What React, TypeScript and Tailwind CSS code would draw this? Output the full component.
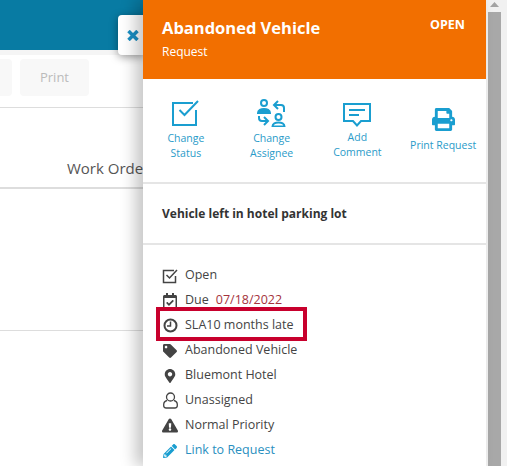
import React from 'react';
import {
  FaExclamationTriangle,
  FaMapMarkerAlt,
  FaPencilAlt,
  FaPrint,
  FaRegCalendarCheck,
  FaTag,
} from 'react-icons/fa';

const StatusIcon = () => (
  <svg width="27" height="26" viewBox="0 0 27 26" fill="none" stroke="#1a9ed0" strokeWidth="2">
    <path d="M21 3H1v22h23V10" />
    <path d="M7.500 10l5 5L26 1" />
  </svg>
);

const AssigneeIcon = () => (
  <svg width="29" height="28" viewBox="0 0 29 28" fill="none" stroke="#1a9ed0" strokeWidth="2">
    <circle cx="7" cy="4" r="3" />
    <path d="M1 14c0-5.500 12-5.500 12 0z" fill="#1a9ed0" />
    <circle cx="21.500" cy="18" r="3" />
    <path d="M15.500 27.500c0-5.500 12-5.500 12 0z" />
    <path d="M27 13V9c0-2-1-3-3-3h-6M21 2l-4 4 4 4" />
    <path d="M2 17v2c0 2 1 3 3 3h6M7 18l4 4-4 4" />
  </svg>
);

const CommentIcon = () => (
  <svg width="28" height="24" viewBox="0 0 28 24" fill="none" stroke="#1a9ed0" strokeWidth="2">
    <path d="M1 1h26v17h-9l-4 4.500L10 18H1z" />
    <path d="M6 7h16M6 12h10" />
  </svg>
);

const CheckIcon = () => (
  <svg width="16" height="16" viewBox="0 0 16 16" fill="none" stroke="#444" strokeWidth="1.500">
    <path d="M12 2.500H1.500v12h12V8" />
    <path d="M4.500 7l3 3L15 2" />
  </svg>
);

const ClockIcon = () => (
  <svg width="15" height="15" viewBox="0 0 15 15" fill="none" stroke="#444" strokeWidth="2">
    <circle cx="7.500" cy="7.500" r="6" />
    <path d="M7.500 3.500v4.500H4" strokeWidth="1.500" />
  </svg>
);

const UserIcon = () => (
  <svg width="15" height="17" viewBox="0 0 15 17" fill="none" stroke="#444" strokeWidth="1.300">
    <circle cx="7.500" cy="5" r="4" />
    <path d="M4 8.500c-2 .5-3.300 2-3.300 4v1c0 1.300 1 2.500 2.500 2.500h8.600c1.500 0 2.500-1.200 2.500-2.500v-1c0-2-1.300-3.500-3.300-4" />
  </svg>
);

const CloseIcon = () => (
  <svg width="12" height="11" viewBox="0 0 12 11" fill="none" stroke="#1a8fc4" strokeWidth="3.500">
    <path d="M1.500 1l9 9M10.500 1l-9 9" />
  </svg>
);

const actions = [
  { label: ['Change', 'Status'], icon: <StatusIcon />, box: 'h-[26px] mt-[21px]', gap: 'mt-[5px]' },
  { label: ['Change', 'Assignee'], icon: <AssigneeIcon />, box: 'h-[28px] mt-[20px]', gap: 'mt-[4px]' },
  { label: ['Add', 'Comment'], icon: <CommentIcon />, box: 'h-[24px] mt-[24px]', gap: 'mt-[3px]' },
  { label: ['Print Request'], icon: <FaPrint size={23} color="#1a9ed0" />, box: 'h-[23px] mt-[29px]', gap: 'mt-[7px]' },
];

const rows = [
  { icon: <CheckIcon />, text: 'Open' },
  { icon: <FaRegCalendarCheck size={16} />, text: 'Due', date: '07/18/2022' },
  { icon: <ClockIcon />, text: 'SLA10 months late' },
  { icon: <FaTag size={14} />, text: 'Abandoned Vehicle' },
  { icon: <FaMapMarkerAlt size={14} />, text: 'Bluemont Hotel' },
  { icon: <UserIcon />, text: 'Unassigned' },
  { icon: <FaExclamationTriangle size={17} />, text: 'Normal Priority' },
];

export default function App() {
  return (
    <div className="relative flex h-[466px] w-[507px] overflow-hidden bg-white text-[#444] font-['Open_Sans','Noto_Sans',sans-serif]">
      {/* Page behind the drawer */}
      <div className="w-[143px] shrink-0 overflow-hidden">
        <div className="h-[50px] bg-[#087ba3]" />
        <div className="h-[5px] bg-[#f5f5f5]" />
        <div className="flex h-[53px] items-start border-b border-[#ddd] pt-1">
          <div className="h-[37px] w-[12px] rounded-r bg-[#f8f8f8]" />
          <div className="ml-2 flex h-[37px] w-[69px] items-center justify-center rounded bg-[#f8f8f8] text-[13px] text-[#bbb]">
            Print
          </div>
        </div>
        <div className="h-[81px] border-b-2 border-[#ddd] pl-[67px] pt-[49px]">
          <div className="whitespace-nowrap text-[15px] leading-[22px] text-[#555]">Work Order</div>
        </div>
        <div className="h-[142px] border-b border-[#ddd]" />
      </div>

      {/* Drawer */}
      <div className="z-10 w-[343px] shrink-0 bg-white shadow-[-8px_0_14px_rgba(0,0,0,0.22)]">
        <div className="flex h-[79px] items-start justify-between bg-[#f26f00] pl-[19px] pr-[21px] text-white">
          <div>
            <div className="mt-[17px] text-[16.500px] font-bold leading-[22px]">Abandoned Vehicle</div>
            <div className="mt-[4px] text-[12px] leading-[18px]">Request</div>
          </div>
          <div className="mt-[16px] text-[12.500px] font-bold leading-[18px]">OPEN</div>
        </div>

        <div className="grid h-[105px] grid-cols-4 border-b-2 border-[#e5e5e5]">
          {actions.map((a) => (
            <div key={a.label[0] + a.label[1]} className="flex flex-col items-center text-center text-[10.500px] leading-[15px] text-[#2a9bc9]">
              <div className={`flex items-center justify-center ${a.box}`}>{a.icon}</div>
              <div className={a.gap}>
                {a.label.map((l) => (
                  <div key={l}>{l}</div>
                ))}
              </div>
            </div>
          ))}
        </div>

        <div className="flex h-[61px] items-center border-b-2 border-[#e5e5e5] pl-[19px] text-[12px] font-bold text-[#333]">
          Vehicle left in hotel parking lot
        </div>

        <div className="pl-[19px] pt-[18px] text-[12.500px]">
          {rows.map((r) => (
            <div key={r.text} className="flex h-[25px] items-center">
              <span className="flex w-[16px] justify-center text-[#444]">{r.icon}</span>
              <span className="ml-[7px]">{r.text}</span>
              {r.date && <span className="ml-[7px] text-[#a5333c]">{r.date}</span>}
            </div>
          ))}
          <div className="flex h-[25px] items-center text-[#2a8fc0]">
            <span className="flex w-[16px] justify-center text-[#1a9ed0]">
              <FaPencilAlt size={14} />
            </span>
            <span className="ml-[7px]">Link to Request</span>
          </div>
        </div>
      </div>

      {/* Scrollbar */}
      <div className="flex w-[21px] shrink-0 flex-col items-center bg-[#f1f1f1] pr-[4px]">
        <svg width="9" height="5" viewBox="0 0 9 5" className="mt-[2px]">
          <path d="M4.500 0L9 5H0z" fill="#a3a3a3" />
        </svg>
        <div className="mt-[5px] w-[13px] flex-1 bg-[#a8a8a8]" />
      </div>

      {/* Close tab */}
      <div className="absolute left-[118px] top-[15px] z-0 flex h-[40px] w-[26px] items-center rounded-l bg-white pl-[9px] shadow-[0_2px_8px_rgba(0,0,0,0.4)]">
        <CloseIcon />
      </div>

      {/* Highlight */}
      <div className="absolute left-[156px] top-[307px] z-20 h-[34px] w-[151px] border-[4px] border-[#c8002d]" />
    </div>
  );
}
